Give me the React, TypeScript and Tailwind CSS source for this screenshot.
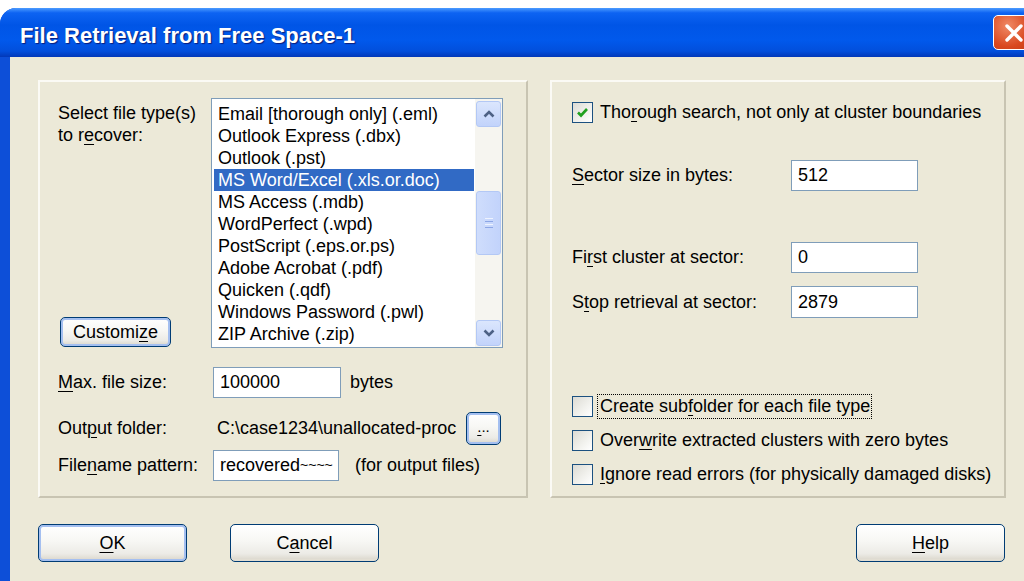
import type { ReactNode } from "react";

const fileTypes = [
  "Email [thorough only] (.eml)",
  "Outlook Express (.dbx)",
  "Outlook (.pst)",
  "MS Word/Excel (.xls.or.doc)",
  "MS Access (.mdb)",
  "WordPerfect (.wpd)",
  "PostScript (.eps.or.ps)",
  "Adobe Acrobat (.pdf)",
  "Quicken (.qdf)",
  "Windows Password (.pwl)",
  "ZIP Archive (.zip)",
];

// underlined access-key letter
function K({ children }: { children: ReactNode }) {
  return <span className="underline decoration-1 underline-offset-[3px]">{children}</span>;
}

function XpButton({ children, className = "", glow = false }: { children: ReactNode; className?: string; glow?: boolean }) {
  return (
    <div
      className={`flex items-center justify-center rounded-[5px] border border-[#003c74] bg-[linear-gradient(to_bottom,#ffffff_0%,#f7f7f4_45%,#ecebe6_80%,#d8d4c8_100%)] text-black ${
        glow ? "shadow-[inset_0_0_0_2px_#a4bff0]" : "shadow-[inset_0_-2px_0_#e2ded3]"
      } ${className}`}
    >
      {children}
    </div>
  );
}

function TextBox({ children, className = "" }: { children: ReactNode; className?: string }) {
  return (
    <div className={`flex h-[31px] items-center overflow-hidden whitespace-nowrap border border-[#7f9db9] bg-white pl-[6px] ${className}`}>
      {children}
    </div>
  );
}

function CheckBox({ checked = false }: { checked?: boolean }) {
  return (
    <div className="flex h-[21px] w-[21px] shrink-0 items-center justify-center border border-[#1c5180] bg-[linear-gradient(135deg,#dcdbd4_0%,#f2f2ee_60%,#ffffff_100%)]">
      {checked && (
        <svg width="15" height="15" viewBox="0 0 15 15">
          <path d="M3 7.5 L6 10.5 L12 4" fill="none" stroke="#21a121" strokeWidth="2.6" />
        </svg>
      )}
    </div>
  );
}

function ScrollButton({ dir }: { dir: "up" | "down" }) {
  return (
    <div className="flex h-[26px] w-[25px] items-center justify-center rounded-[3px] border border-[#b3c8f5] bg-[linear-gradient(to_bottom,#dbe6fd,#c2d3fb)]">
      <svg width="14" height="10" viewBox="0 0 14 10">
        <path d={dir === "up" ? "M2.5 7.5 L7 3 L11.5 7.5" : "M2.5 2.5 L7 7 L11.5 2.5"} fill="none" stroke="#4d6185" strokeWidth="2.6" />
      </svg>
    </div>
  );
}

function FileTypeList() {
  return (
    <div className="flex h-[250px] w-[292px] border border-[#7f9db9] bg-white">
      <div className="ml-[2px] w-[260px] pt-[4px]">
        {fileTypes.map((t, i) => (
          <div
            key={t}
            className={`h-[22px] whitespace-nowrap pl-[4px] leading-[22px] ${i === 3 ? "bg-[#316ac5] text-white" : ""}`}
          >
            {t}
          </div>
        ))}
      </div>
      <div className="ml-auto flex w-[27px] flex-col items-center bg-[#f6f5f0] pt-[2px] pb-[1px]">
        <ScrollButton dir="up" />
        <div className="mt-[64px] flex h-[64px] w-[25px] items-center justify-center rounded-[3px] border border-[#b3c8f5] bg-[linear-gradient(to_right,#cfddfc,#c2d3fb)]">
          <div className="flex flex-col gap-[2px]">
            <div className="h-[1px] w-[8px] bg-[#eef3fe]" />
            <div className="h-[1px] w-[8px] bg-[#8ca6e6]" />
            <div className="h-[1px] w-[8px] bg-[#eef3fe]" />
            <div className="h-[1px] w-[8px] bg-[#8ca6e6]" />
          </div>
        </div>
        <div className="flex-1" />
        <ScrollButton dir="down" />
      </div>
    </div>
  );
}

const panel =
  "h-[418px] border-2 border-t-[#fbfaf5] border-l-[#fbfaf5] border-r-[#c8c4b2] border-b-[#c8c4b2]";

export default function App() {
  return (
    <div className="h-[581px] w-[1024px] overflow-hidden bg-white pt-[8px] font-['Liberation_Sans',Arial,sans-serif] text-[18px] text-black">
      <div className="flex h-[573px] w-[1045px] flex-col overflow-hidden rounded-t-[16px] bg-[#0d4fd8]">
        {/* title bar */}
        <div className="flex h-[49px] shrink-0 items-center bg-[linear-gradient(to_bottom,#4c9bff_0%,#0d63f2_10%,#0055e6_35%,#0159ec_65%,#024fdc_88%,#0238b8_100%)]">
          <span className="pl-[20px] pt-[6px] text-[22px] font-bold text-white [text-shadow:1px_1px_1px_#0b1c7a]">
            File Retrieval from Free Space-1
          </span>
          <div className="ml-auto mr-[10px] flex h-[35px] w-[42px] items-center justify-center rounded-[5px] border-[1.5px] border-white bg-[radial-gradient(circle_at_35%_30%,#f08a66,#d9481f_60%,#c23a14)]">
            <svg width="22" height="22" viewBox="0 0 22 22">
              <path d="M4 4 L18 18 M18 4 L4 18" stroke="white" strokeWidth="3.4" strokeLinecap="round" />
            </svg>
          </div>
        </div>

        {/* dialog body */}
        <div className="ml-[10px] mr-[10px] flex-1 bg-[#ece9d8] pl-[28px] pt-[23px]">
          <div className="flex gap-[22px]">
            {/* left group */}
            <div className={`${panel} w-[490px] pl-[18px] pt-[16px]`}>
              <div className="flex">
                <div className="flex w-[153px] flex-col justify-between pb-[1px] pt-[4px] leading-[22px]">
                  <div>
                    Select file type(s)
                    <br />
                    to r<K>e</K>cover:
                  </div>
                  <XpButton glow className="ml-[2px] h-[30px] w-[111px]">
                    Customi<K>z</K>e
                  </XpButton>
                </div>
                <FileTypeList />
              </div>

              <div className="mt-[19px] flex h-[31px] items-center">
                <div className="w-[155px]">
                  <K>M</K>ax. file size:
                </div>
                <TextBox className="w-[128px]">100000</TextBox>
                <span className="ml-[9px]">bytes</span>
              </div>

              <div className="mt-[14px] flex h-[33px] items-center">
                <div className="w-[155px]">
                  Out<K>p</K>ut folder:
                </div>
                <div className="w-[245px] overflow-hidden whitespace-nowrap pl-[4px]">C:\case1234\unallocated-proc</div>
                <XpButton glow className="ml-[8px] h-[33px] w-[35px] pb-[4px] text-[15px] leading-none">
                  <K>.</K>..
                </XpButton>
              </div>

              <div className="mt-[5px] flex h-[31px] items-center">
                <div className="w-[155px]">
                  File<K>n</K>ame pattern:
                </div>
                <TextBox className="w-[126px] pl-[4px]">
                  recovered<span className="text-[14px]">~~~~</span>
                </TextBox>
                <span className="ml-[16px]">(for output files)</span>
              </div>
            </div>

            {/* right group */}
            <div className={`${panel} w-[456px] pl-[20px] pt-[20px]`}>
              <div className="flex h-[21px] items-center">
                <CheckBox checked />
                <span className="ml-[7px]">
                  Tho<K>r</K>ough search, not only at cluster boundaries
                </span>
              </div>

              <div className="mt-[37px] flex h-[31px] items-center">
                <div className="w-[219px]">
                  <K>S</K>ector size in bytes:
                </div>
                <TextBox className="w-[127px]">512</TextBox>
              </div>

              <div className="mt-[51px] flex h-[31px] items-center">
                <div className="w-[219px]">
                  Fi<K>r</K>st cluster at sector:
                </div>
                <TextBox className="w-[127px]">0</TextBox>
              </div>

              <div className="mt-[13px] flex h-[32px] items-center">
                <div className="w-[219px]">
                  S<K>t</K>op retrieval at sector:
                </div>
                <TextBox className="h-[32px] w-[127px]">2879</TextBox>
              </div>

              <div className="mt-[78px] flex h-[21px] items-center">
                <CheckBox />
                <span className="ml-[4px] border border-dotted border-black pl-[2px] pr-[1px] leading-[23px]">
                  Create sub<K>f</K>older for each file type
                </span>
              </div>
              <div className="mt-[13px] flex h-[21px] items-center">
                <CheckBox />
                <span className="ml-[7px]">
                  Over<K>w</K>rite extracted clusters with zero bytes
                </span>
              </div>
              <div className="mt-[13px] flex h-[21px] items-center">
                <CheckBox />
                <span className="ml-[7px]">
                  <K>I</K>gnore read errors (for physically damaged disks)
                </span>
              </div>
            </div>
          </div>

          {/* dialog buttons */}
          <div className="mt-[26px] flex">
            <XpButton glow className="h-[38px] w-[149px] shadow-[inset_0_0_0_2px_#8fb1ec]">
              <K>O</K>K
            </XpButton>
            <XpButton className="ml-[43px] h-[38px] w-[149px]">
              C<K>a</K>ncel
            </XpButton>
            <XpButton className="ml-[477px] h-[38px] w-[149px]">
              <K>H</K>elp
            </XpButton>
          </div>
        </div>
      </div>
    </div>
  );
}
